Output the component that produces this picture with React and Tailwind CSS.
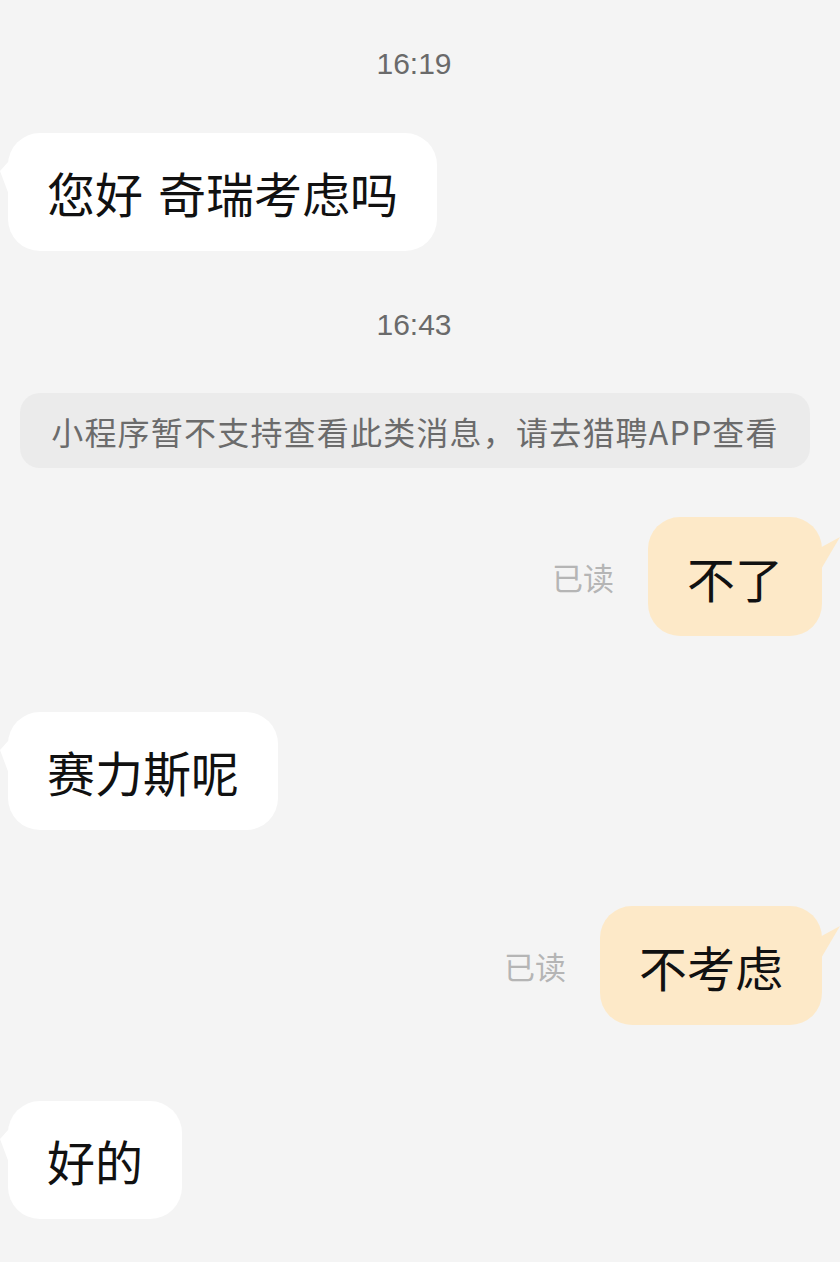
import React from "react";

const CJK = { fontFamily: '"Noto Sans CJK SC", "Noto Sans", sans-serif' };
const NUM = { fontFamily: '"Liberation Sans", Arial, sans-serif' };

function Time({ children, className = "" }) {
  return (
    <div
      className={"h-[36px] leading-[36px] text-center pr-[12px] text-[30px] text-[#6a6a6a] " + className}
      style={NUM}
    >
      {children}
    </div>
  );
}

function LeftBubble({ children, className = "" }) {
  return (
    <div className={"relative flex pl-[8px] " + className}>
      <svg className="absolute left-0 top-[28px]" width="10" height="36" viewBox="0 0 10 36">
        <polygon points="9,0 0,10 9,34" fill="#ffffff" />
      </svg>
      <div
        className="relative h-[118px] flex items-center px-[39px] rounded-[32px] bg-white text-[48px] text-[#111] leading-none"
        style={CJK}
      >
        {children}
      </div>
    </div>
  );
}

function RightBubble({ children, className = "" }) {
  return (
    <div className={"relative flex justify-end items-center pr-[18px] " + className}>
      <span className="mr-[34px] text-[31px] text-[#b5b5b5] leading-none" style={CJK}>
        已读
      </span>
      <div className="relative">
        <div
          className="h-[119px] flex items-center px-[39px] rounded-[32px] bg-[#fde9c8] text-[48px] text-[#111] leading-none"
          style={CJK}
        >
          {children}
        </div>
        <svg className="absolute right-[-18px] top-[20px]" width="22" height="36" viewBox="0 0 22 36">
          <polygon points="0,12 22,0 2,34" fill="#fde9c8" />
        </svg>
      </div>
    </div>
  );
}

export default function App() {
  return (
    <div className="w-[840px] min-h-[1262px] bg-[#f4f4f4] flex flex-col overflow-hidden">
      <Time className="mt-[46px]">16:19</Time>
      <LeftBubble className="mt-[51px]">
        您好<span className="inline-block w-[15px]"></span>奇瑞考虑吗
      </LeftBubble>
      <Time className="mt-[56px]">16:43</Time>
      <div className="mt-[50px] mx-[20px] w-[790px] h-[75px] rounded-[20px] bg-[#ebebeb] flex items-center justify-center">
        <span className="text-[32px] tracking-[1.2px] text-[#6b6b6b] leading-none" style={CJK}>
          小程序暂不支持查看此类消息，请去猎聘APP查看
        </span>
      </div>
      <RightBubble className="mt-[49px]">不了</RightBubble>
      <LeftBubble className="mt-[76px]">赛力斯呢</LeftBubble>
      <RightBubble className="mt-[76px]">不考虑</RightBubble>
      <LeftBubble className="mt-[76px]">好的</LeftBubble>
    </div>
  );
}
